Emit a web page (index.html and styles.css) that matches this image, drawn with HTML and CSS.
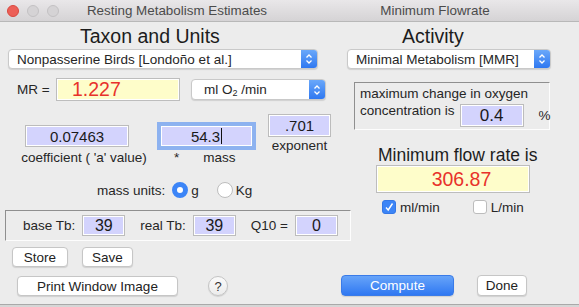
FILE: index.html
```html
<!DOCTYPE html>
<html lang="en">
<head>
    <meta charset="UTF-8">
    <meta name="viewport" content="width=device-width, initial-scale=1.0">
    <title>Resting Metabolism Estimates</title>
    <link rel="stylesheet" href="styles.css">
</head>
<body>

    <div class="window">
        <!-- Title bar -->
        <div class="titlebar">
            <div class="lights">
                <span class="light red"></span>
                <span class="light"></span>
                <span class="light"></span>
            </div>
            <div class="title">Resting Metabolism Estimates</div>
            <div class="title second">Minimum Flowrate</div>
        </div>

        <div class="panes">
            <!-- Left pane: taxon and units -->
            <div class="pane left">
                <h2 class="heading taxon-heading">Taxon and Units</h2>
                <div class="select taxon-select">
                    <span class="select-text">Nonpasserine Birds [Londoño et al.]</span>
                    <span class="stepper">
                        <svg width="8" height="12" viewBox="0 0 8 12"><path d="M1.5 4.5 L4 2 L6.5 4.5 M1.5 7.5 L4 10 L6.5 7.5" fill="none" stroke="#fff" stroke-width="1.3"/></svg>
                    </span>
                </div>

                <div class="mr-row">
                    <span class="mr-label">MR =</span>
                    <div class="result mr-value">1.227</div>
                    <div class="select units-select">
                        <span class="select-text">ml O<sub>2</sub> /min</span>
                        <span class="stepper">
                            <svg width="8" height="12" viewBox="0 0 8 12"><path d="M1.5 4.5 L4 2 L6.5 4.5 M1.5 7.5 L4 10 L6.5 7.5" fill="none" stroke="#fff" stroke-width="1.3"/></svg>
                        </span>
                    </div>
                </div>

                <div class="formula-row">
                    <div class="formula-col coef-col">
                        <div class="field coef-field">0.07463</div>
                        <div class="field-label">coefficient ( 'a' value)</div>
                    </div>
                    <div class="formula-col mass-col">
                        <div class="field mass-field focused">54.3<span class="caret"></span></div>
                        <div class="field-label mass-label"><span>*</span><span>mass</span></div>
                    </div>
                    <div class="formula-col exp-col">
                        <div class="field exp-field">.701</div>
                        <div class="field-label">exponent</div>
                    </div>
                </div>

                <div class="units-row">
                    <span>mass units:</span>
                    <span class="radio checked"></span>
                    <span class="radio-text">g</span>
                    <span class="radio"></span>
                    <span class="radio-text">Kg</span>
                </div>

                <div class="groove tb-box">
                    <span class="tb-label">base Tb:</span>
                    <div class="field tb-field">39</div>
                    <span class="tb-label">real Tb:</span>
                    <div class="field tb-field">39</div>
                    <span class="tb-label">Q10 =</span>
                    <div class="field tb-field">0</div>
                </div>

                <div class="btn-row store-row">
                    <button class="btn store">Store</button>
                    <button class="btn save">Save</button>
                </div>

                <div class="btn-row print-row">
                    <button class="btn print">Print Window Image</button>
                    <span class="help">?</span>
                </div>
            </div>

            <!-- Right pane: activity and flow rate -->
            <div class="pane right">
                <h2 class="heading activity-heading">Activity</h2>
                <div class="select activity-select">
                    <span class="select-text">Minimal Metabolism [MMR]</span>
                    <span class="stepper">
                        <svg width="8" height="12" viewBox="0 0 8 12"><path d="M1.5 4.5 L4 2 L6.5 4.5 M1.5 7.5 L4 10 L6.5 7.5" fill="none" stroke="#fff" stroke-width="1.3"/></svg>
                    </span>
                </div>

                <div class="groove oxygen-box">
                    <div class="oxygen-line">maximum change in oxygen</div>
                    <div class="oxygen-row">
                        <span class="oxygen-line">concentration is</span>
                        <div class="field oxygen-field">0.4</div>
                        <span class="percent">%</span>
                    </div>
                </div>

                <div class="flow-heading">Minimum flow rate is</div>
                <div class="result flow-value">306.87</div>

                <div class="check-row">
                    <span class="checkbox checked">
                        <svg width="10" height="10" viewBox="0 0 10 10"><path d="M2 5.5 L4.2 8 L8.5 1.5" fill="none" stroke="#fff" stroke-width="1.4"/></svg>
                    </span>
                    <span class="check-text">ml/min</span>
                    <span class="checkbox l-check"></span>
                    <span class="check-text">L/min</span>
                </div>

                <div class="btn-row action-row">
                    <button class="btn compute">Compute</button>
                    <button class="btn done">Done</button>
                </div>
            </div>
        </div>
    </div>

</body>
</html>
```

FILE: styles.css
```css
/* Global Styles */
* {
    margin: 0;
    padding: 0;
    box-sizing: border-box;
}

body {
    font-family: "Liberation Sans", Arial, sans-serif;
    font-size: 13.5px;
    color: #262626;
    background-color: #d6d6d6;
    width: 579px;
    height: 307px;
    overflow: hidden;
}

.window {
    width: 579px;
    height: 305px;
    background-color: #ececec;
    border-bottom: 1px solid #a9a9a9;
    display: flex;
    flex-direction: column;
}

/* Title bar */
.titlebar {
    height: 22px;
    flex-shrink: 0;
    display: grid;
    grid-template-columns: 66px 222px 1fr;
    align-items: center;
    background: linear-gradient(#e9e7e9, #d5d3d5);
    border-bottom: 1px solid #b8b8b8;
}

.lights {
    display: flex;
    gap: 8px;
    padding-left: 7px;
}

.light {
    width: 12px;
    height: 12px;
    border-radius: 50%;
    background-color: #d5d3d5;
    border: 1px solid #c3c1c3;
}

.light.red {
    background-color: #ec5f57;
    border-color: #d9483f;
}

.title {
    text-align: center;
    font-size: 13.4px;
    color: #4b4b4b;
}

.title.second {
    padding-left: 3px;
}

/* Panes */
.panes {
    flex: 1;
    display: flex;
}

.pane {
    display: flex;
    flex-direction: column;
    padding-bottom: 8px;
}

.pane.left {
    width: 340px;
    flex-shrink: 0;
}

.pane.right {
    flex: 1;
}

.heading {
    height: 24px;
    margin-top: 2px;
    font-size: 19.5px;
    font-weight: normal;
    line-height: 24px;
    color: #1c1c1c;
}

.taxon-heading {
    padding-left: 80px;
}

.activity-heading {
    padding-left: 62px;
}

/* Popup selects */
.select {
    height: 20px;
    margin-top: 1px;
    display: flex;
    align-items: center;
    justify-content: space-between;
    background-color: #fff;
    border: 1px solid #c9c9c9;
    border-radius: 4px;
    box-shadow: 0 1px 1px rgba(0, 0, 0, 0.12);
    overflow: hidden;
}

.select-text {
    padding-left: 8px;
    white-space: nowrap;
}

.stepper {
    width: 16px;
    height: 100%;
    display: flex;
    align-items: center;
    justify-content: center;
    background: linear-gradient(#6aa8fa, #2f78f1);
}

.taxon-select {
    width: 310px;
    margin-left: 8px;
}

.activity-select {
    width: 204px;
    margin-left: 7px;
}

.units-select {
    width: 135px;
    height: 21px;
    margin: 0 0 0 11px;
}

.units-select .select-text {
    padding-left: 12px;
}

sub {
    font-size: 9px;
    vertical-align: -2px;
}

/* Result fields */
.result {
    background-color: #fefdca;
    border: 1px solid #bdbdbd;
    box-shadow: inset 0 0 0 1px #fff;
    color: #e8322b;
    font-size: 19.5px;
    display: flex;
    align-items: center;
}

.mr-row {
    margin-top: 9px;
    height: 23px;
    display: flex;
    align-items: center;
}

.mr-label {
    margin-left: 17px;
    width: 39px;
}

.mr-value {
    width: 124px;
    height: 23px;
    padding-left: 15px;
}

/* Value fields */
.field {
    height: 22px;
    display: flex;
    align-items: center;
    justify-content: center;
    flex-shrink: 0;
    background-color: #d3d3fd;
    border: 1px solid #bcbcbc;
    box-shadow: inset 0 0 0 1px #fff;
    font-size: 15px;
    color: #1a1a1a;
}

.field.focused {
    border-color: #8fb4ee;
    box-shadow: 0 0 0 3px #8db2f0, inset 0 0 0 1px #fff;
}

.caret {
    width: 1px;
    height: 16px;
    margin-left: 1px;
    background-color: #111;
}

.formula-row {
    margin-top: 13px;
    display: flex;
    align-items: flex-start;
}

.formula-col {
    display: flex;
    flex-direction: column;
}

.field-label {
    margin-top: 3px;
    line-height: 16px;
    text-align: center;
    white-space: nowrap;
}

.coef-col {
    width: 130px;
    margin-left: 19px;
    margin-top: 11px;
}

.coef-field {
    width: 104px;
    margin-left: 6px;
}

.mass-col {
    width: 93px;
    margin-left: 11px;
    margin-top: 11px;
}

.mass-label {
    display: flex;
    gap: 24px;
    padding-left: 14px;
    text-align: left;
}

.exp-col {
    width: 63px;
    margin-left: 15px;
}

.exp-field {
    height: 23px;
}

.exp-col .field-label {
    margin-top: 1px;
}

/* Mass units */
.units-row {
    margin-top: 16px;
    height: 16px;
    padding-left: 97px;
    display: flex;
    align-items: center;
}

.radio {
    width: 16px;
    height: 16px;
    margin-left: 18px;
    border-radius: 50%;
    background-color: #fff;
    border: 1px solid #bdbdbd;
}

.radio.checked {
    margin-left: 7px;
    border: 5px solid #3c85f7;
    background-color: #fff;
}

.radio-text {
    margin-left: 3px;
}

/* Grooved boxes */
.groove {
    border-top: 1px solid #8f8f8f;
    border-left: 1px solid #8f8f8f;
    border-right: 1px solid #fdfdfd;
    border-bottom: 1px solid #fdfdfd;
}

.tb-box {
    width: 346px;
    height: 31px;
    margin: 12px 0 0 5px;
    display: flex;
    align-items: center;
    padding-left: 17px;
    flex-shrink: 0;
}

.tb-label {
    white-space: nowrap;
}

.tb-field {
    width: 43px;
    height: 21px;
    font-size: 16px;
    margin: 0 15px 0 7px;
}

/* Buttons */
.btn-row {
    display: flex;
    align-items: center;
}

.btn {
    height: 20px;
    font-family: "Liberation Sans", Arial, sans-serif;
    font-size: 13.5px;
    color: #222;
    background-color: #fff;
    border: 1px solid #c6c6c6;
    border-radius: 4px;
    box-shadow: 0 1px 1px rgba(0, 0, 0, 0.12);
}

.store-row {
    margin-top: 6px;
}

.store {
    width: 56px;
    margin-left: 12px;
}

.save {
    width: 51px;
    margin-left: 14px;
}

.print-row {
    margin-top: 9px;
}

.print {
    width: 161px;
    margin-left: 17px;
}

.help {
    width: 20px;
    height: 20px;
    margin-left: 30px;
    border-radius: 50%;
    display: flex;
    align-items: center;
    justify-content: center;
    background: linear-gradient(#fafafa, #ececec);
    border: 1px solid #c4c4c4;
    box-shadow: 0 1px 1px rgba(0, 0, 0, 0.12);
    font-size: 13px;
    color: #333;
}

/* Oxygen box */
.oxygen-box {
    width: 196px;
    height: 48px;
    margin: 13px 0 0 14px;
    padding: 3px 0 0 5px;
}

.oxygen-line {
    line-height: 16px;
    white-space: nowrap;
}

.oxygen-row {
    display: flex;
    align-items: flex-start;
}

.oxygen-row .oxygen-line {
    width: 98px;
    margin-top: 1px;
}

.oxygen-field {
    width: 64px;
    height: 23px;
    margin: 2px 0 0 5px;
    font-size: 17px;
}

.percent {
    margin: 6px 0 0 15px;
}

/* Flow rate */
.flow-heading {
    margin-top: 15px;
    height: 20px;
    line-height: 20px;
    padding-left: 38px;
    font-size: 17.5px;
    color: #1c1c1c;
}

.flow-value {
    width: 154px;
    height: 28px;
    margin-left: 36px;
    justify-content: center;
    padding-left: 17px;
}

.check-row {
    margin-top: 7px;
    height: 14px;
    display: flex;
    align-items: center;
}

.checkbox {
    width: 14px;
    height: 14px;
    border-radius: 3px;
    background-color: #fff;
    border: 1px solid #bcbcbc;
    display: flex;
    align-items: center;
    justify-content: center;
}

.checkbox.checked {
    margin-left: 42px;
    background-color: #3c85f7;
    border-color: #3477e6;
}

.check-text {
    margin-left: 4px;
}

.l-check {
    margin-left: 33px;
}

.action-row {
    margin-top: auto;
}

.compute {
    width: 113px;
    height: 21px;
    margin-left: 1px;
    color: #fff;
    background: linear-gradient(#67a4f9, #2f78f2);
    border-color: #3a7be8;
}

.done {
    width: 50px;
    height: 21px;
    margin-left: 23px;
}
```
